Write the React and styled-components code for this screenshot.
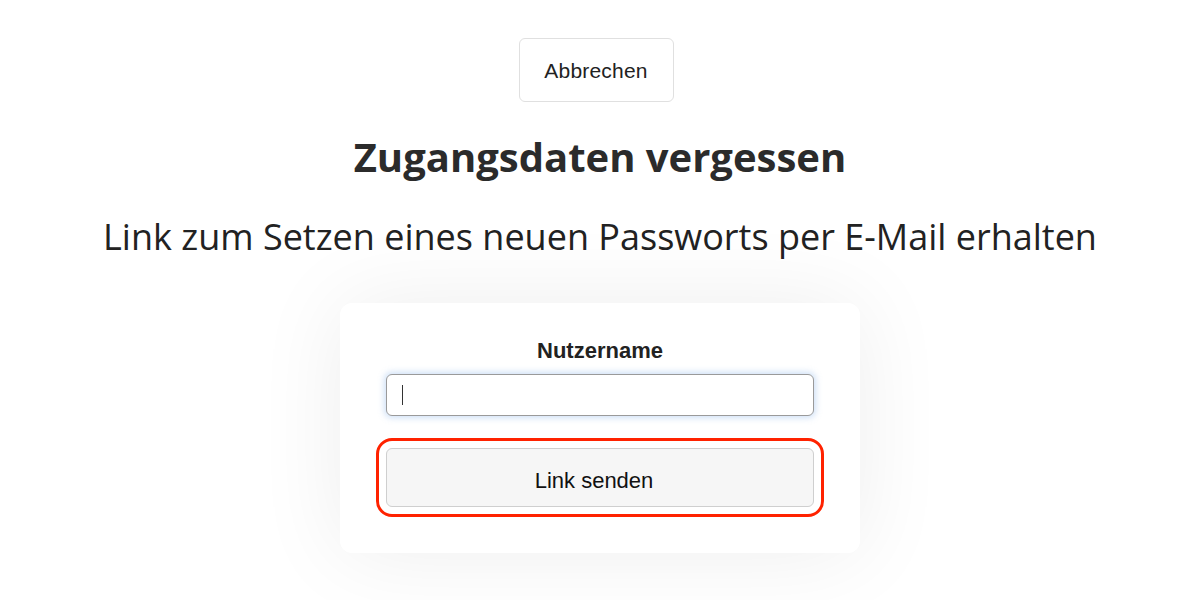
import React from 'react';
import styled, { createGlobalStyle } from 'styled-components';

const GlobalStyle = createGlobalStyle`
  html, body {
    margin: 0;
    padding: 0;
    background: #ffffff;
  }
  body {
    font-family: 'Liberation Sans', Arial, sans-serif;
    color: #222;
  }
`;

const Page = styled.div`
  width: 1200px;
  height: 600px;
  display: flex;
  flex-direction: column;
  align-items: center;
  padding-top: 38px;
  box-sizing: border-box;
  overflow: hidden;
`;

const CancelButton = styled.button`
  width: 155px;
  height: 64px;
  margin-right: 8px;
  padding-top: 2px;
  background: #fff;
  border: 1px solid #e0e0e0;
  border-radius: 6px;
  font-family: 'Liberation Sans', Arial, sans-serif;
  font-size: 21px;
  letter-spacing: 0.2px;
  color: #222;
  cursor: pointer;
`;

const Title = styled.h1`
  margin: 29px 0 0;
  font-family: 'Open Sans', sans-serif;
  font-weight: 700;
  font-size: 40px;
  line-height: 52px;
  color: #2b2b2b;
`;

const Subtitle = styled.p`
  margin: 30px 0 0;
  font-family: 'Open Sans', sans-serif;
  font-weight: 400;
  font-size: 36px;
  line-height: 48px;
  color: #222;
`;

const Card = styled.form`
  margin-top: 42px;
  width: 520px;
  height: 250px;
  box-sizing: border-box;
  background: #fff;
  border-radius: 12px;
  box-shadow: 0 0 90px rgba(0, 0, 0, 0.07);
  padding: 35px 46px 0;
  display: flex;
  flex-direction: column;
  align-items: stretch;
`;

const Label = styled.label`
  text-align: center;
  font-weight: 700;
  font-size: 22px;
  line-height: 26px;
  color: #222;
`;

const Input = styled.div`
  margin-top: 10px;
  height: 42px;
  box-sizing: border-box;
  border: 1px solid #9a9a9a;
  border-radius: 6px;
  background: #fff;
  box-shadow: 0 0 6px 2px rgba(120, 170, 230, 0.35);
  display: flex;
  align-items: center;
  padding-left: 15px;
`;

const Caret = styled.span`
  width: 1px;
  height: 20px;
  background: #333;
`;

const SendButton = styled.button`
  margin-top: 32px;
  height: 59px;
  padding: 6px 12px 0 0;
  border: 1px solid #cfcfcf;
  border-radius: 6px;
  background: #f6f6f6;
  font-family: 'Liberation Sans', Arial, sans-serif;
  font-size: 22px;
  color: #111;
  outline: 3px solid #ff2200;
  outline-offset: 7px;
  cursor: pointer;
`;

export default function App() {
  return (
    <>
      <GlobalStyle />
      <Page>
        <CancelButton type="button">Abbrechen</CancelButton>
        <Title>Zugangsdaten vergessen</Title>
        <Subtitle>Link zum Setzen eines neuen Passworts per E-Mail erhalten</Subtitle>
        <Card onSubmit={(e) => e.preventDefault()}>
          <Label>Nutzername</Label>
          <Input>
            <Caret />
          </Input>
          <SendButton type="submit">Link senden</SendButton>
        </Card>
      </Page>
    </>
  );
}
